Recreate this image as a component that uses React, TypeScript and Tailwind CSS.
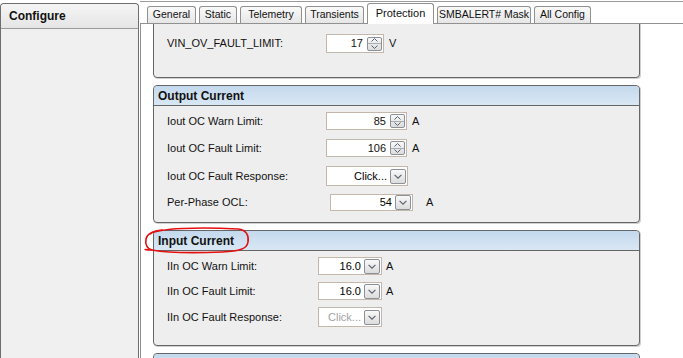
import React from "react";

const Up = () => (
  <svg width="7" height="4" viewBox="0 0 7 4">
    <path d="M0.5 3.5 L3.5 0.5 L6.5 3.5" fill="none" stroke="#5b6370" strokeWidth="1" />
  </svg>
);

const Down = ({ w = 7, h = 4 }: { w?: number; h?: number }) => (
  <svg width={w} height={h} viewBox="0 0 7 4">
    <path d="M0.5 0.5 L3.5 3.5 L6.5 0.5" fill="none" stroke="#5b6370" strokeWidth="1" />
  </svg>
);

const Spin = ({ value, className }: { value: string; className: string }) => (
  <div className={`flex items-center justify-end border border-[#c3b8ab] bg-white pr-[1px] ${className}`}>
    <span className="pr-[4px] text-[11px] leading-none">{value}</span>
    <div className="flex h-[14px] w-[15px] flex-col overflow-hidden rounded-[2px] border border-[#8c9198] bg-gradient-to-b from-[#f8f8f8] to-[#dcdcdc]">
      <div className="flex flex-1 items-center justify-center border-b border-[#a9aeb4]">
        <Up />
      </div>
      <div className="flex flex-1 items-center justify-center">
        <Down />
      </div>
    </div>
  </div>
);

const Combo = ({
  value,
  className,
  disabled,
}: {
  value: string;
  className: string;
  disabled?: boolean;
}) => (
  <div className={`flex items-center justify-end border border-[#c3b8ab] bg-white pr-[1px] ${className}`}>
    <span className={`pr-[3px] text-[11px] leading-none ${disabled ? "text-[#a3a3a3]" : "text-black"}`}>
      {value}
    </span>
    <div className="flex h-[15px] w-[16px] items-center justify-center rounded-[2px] border border-[#8c9198] bg-gradient-to-b from-[#f8f8f8] to-[#dcdcdc]">
      <Down w={8} h={5} />
    </div>
  </div>
);

const Header = ({ title }: { title: string }) => (
  <div className="flex h-[20px] items-center rounded-t-[4px] border-b border-[#666] bg-gradient-to-b from-[#c4d9ed] to-[#d9e7f4] pl-[4px] text-[12px] font-bold">
    {title}
  </div>
);

const tabs = [
  { name: "General", w: "w-[49px]" },
  { name: "Static", w: "w-[38px]" },
  { name: "Telemetry", w: "w-[62px]" },
  { name: "Transients", w: "w-[59px]" },
  { name: "Protection", w: "w-[67px]", active: true },
  { name: "SMBALERT# Mask", w: "w-[94px]" },
  { name: "All Config", w: "w-[57px]" },
];

const App = () => {
  return (
    <div className="relative flex h-[358px] w-[683px] overflow-hidden bg-white font-['Liberation_Sans',Arial,sans-serif] text-[11px] text-[#111]">
      {/* left panel */}
      <div className="mt-[3px] flex w-[139px] flex-col rounded-t-[4px] border-x border-t border-[#6e6e6e] bg-[#f0f0f0]">
        <div className="flex h-[25px] items-center rounded-t-[4px] border-b border-[#9a9a9a] bg-gradient-to-b from-[#f5f5f5] to-[#e5e5e5] pl-[8px] text-[12px] font-bold">
          Configure
        </div>
      </div>

      {/* right side */}
      <div className="ml-[1px] flex flex-1 flex-col pt-[1px]">
        <div className="border-t border-[#9b9b9b]" />
        <div className="flex h-[21px] items-end gap-[3px] pl-[7px] text-[10.5px]">
          {tabs.map((t) =>
            t.active ? (
              <div
                key={t.name}
                className={`relative z-10 -mb-[1px] flex h-[21px] items-center justify-center whitespace-nowrap rounded-t-[3px] border-x border-t border-[#919191] bg-white pb-[2px] text-[11px] ${t.w}`}
              >
                {t.name}
              </div>
            ) : (
              <div
                key={t.name}
                className={`flex h-[17px] items-center justify-center whitespace-nowrap rounded-t-[3px] border-x border-t border-[#919191] bg-gradient-to-b from-[#fafafa] to-[#e6e6e6] ${t.w}`}
              >
                {t.name}
              </div>
            )
          )}
        </div>

        <div className="flex flex-1 flex-col overflow-hidden border-l border-t border-[#919191] bg-white pl-[12px]">
          {/* VIN box (scrolled) */}
          <div className="-mt-[26px] h-[80px] w-[487px] shrink-0 rounded-[4px] border border-[#666] bg-[#eeeeee] pl-[13px] pt-[35px] shadow-[1px_1px_0_#d0d0d0]">
            <div className="flex items-center">
              <span className="w-[159px]">VIN_OV_FAULT_LIMIT:</span>
              <Spin value="17" className="h-[19px] w-[58px]" />
              <span className="ml-[5px]">V</span>
            </div>
          </div>

          {/* Output Current */}
          <div className="mt-[7px] h-[138px] w-[487px] shrink-0 rounded-[4px] border border-[#666] bg-[#eeeeee] shadow-[1px_1px_0_#d0d0d0]">
            <Header title="Output Current" />
            <div className="flex flex-col pl-[13px]">
              <div className="mt-[6px] flex items-center">
                <span className="w-[159px]">Iout OC Warn Limit:</span>
                <Spin value="85" className="h-[18px] w-[81px]" />
                <span className="ml-[5px]">A</span>
              </div>
              <div className="mt-[9px] flex items-center">
                <span className="w-[159px]">Iout OC Fault Limit:</span>
                <Spin value="106" className="h-[18px] w-[81px]" />
                <span className="ml-[5px]">A</span>
              </div>
              <div className="mt-[9px] flex items-center">
                <span className="w-[159px]">Iout OC Fault Response:</span>
                <Combo value="Click..." className="h-[20px] w-[82px]" />
              </div>
              <div className="mt-[8px] flex items-center">
                <span className="w-[163px]">Per-Phase OCL:</span>
                <Combo value="54" className="h-[17px] w-[83px]" />
                <span className="ml-[13px]">A</span>
              </div>
            </div>
          </div>

          {/* Input Current */}
          <div className="mt-[7px] h-[116px] w-[487px] shrink-0 rounded-[4px] border border-[#666] bg-[#eeeeee] shadow-[1px_1px_0_#d0d0d0]">
            <Header title="Input Current" />
            <div className="flex flex-col pl-[13px]">
              <div className="mt-[6px] flex items-center">
                <span className="w-[151px]">IIn OC Warn Limit:</span>
                <Combo value="16.0" className="h-[18px] w-[64px]" />
                <span className="ml-[4px]">A</span>
              </div>
              <div className="mt-[7px] flex items-center">
                <span className="w-[151px]">IIn OC Fault Limit:</span>
                <Combo value="16.0" className="h-[18px] w-[64px]" />
                <span className="ml-[4px]">A</span>
              </div>
              <div className="mt-[7px] flex items-center">
                <span className="w-[151px]">IIn OC Fault Response:</span>
                <Combo value="Click..." className="h-[20px] w-[64px]" disabled />
              </div>
            </div>
          </div>

          {/* next box, cut off */}
          <div className="mt-[7px] h-[60px] w-[487px] shrink-0 rounded-[4px] border border-[#666] bg-[#eeeeee]">
            <Header title="" />
          </div>
        </div>
      </div>

      {/* red hand-drawn ring */}
      <svg className="pointer-events-none absolute left-0 top-0" width="683" height="358">
        <path
          d="M150 234 C158 228, 200 227, 238 229 C247 230, 249 236, 248 242 C247 249, 240 251, 222 252 C196 253, 168 253, 152 250 C147 249, 145 244, 146 239 C147 234, 152 231, 162 230"
          fill="none"
          stroke="#e41010"
          strokeWidth="1.6"
          strokeLinecap="round"
        />
        <path d="M152 250 C149 250, 147 250, 145 249.5" fill="none" stroke="#e41010" strokeWidth="1.4" strokeLinecap="round" />
      </svg>
    </div>
  );
};

export default App;
